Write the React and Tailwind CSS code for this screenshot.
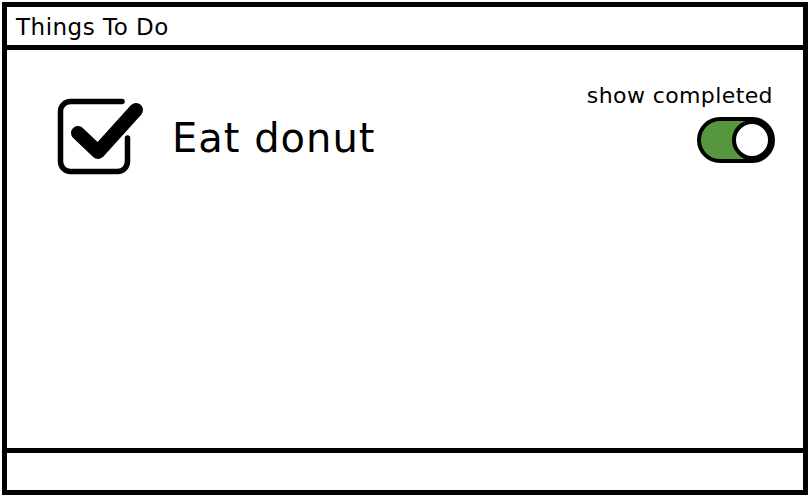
export default function App() {
  return (
    <div className="w-[812px] h-[500px] bg-white overflow-hidden" style={{ fontFamily: '"DejaVu Sans", sans-serif' }}>
      <div className="ml-[2px] mt-[2px] w-[806px] h-[493px] border-[5px] border-black flex flex-col box-border">
        <div className="h-[43px] shrink-0 border-b-[5px] border-black flex items-center pl-[9px] pt-[3px] text-[23px] text-black leading-none tracking-[0.5px]">
          Things To Do
        </div>
        <div className="flex-1 flex justify-between">
          <div className="flex items-start pl-[43px] pt-[42px]">
            <svg width="100" height="90" viewBox="0 0 100 90" fill="none">
              <path
                d="M72 9.5 H20.5 A10 10 0 0 0 10.5 19.5 V69.5 A10 10 0 0 0 20.5 79.5 H67.5 A10 10 0 0 0 77.5 69.5 V46"
                stroke="black"
                strokeWidth="5.5"
                strokeLinecap="round"
                strokeLinejoin="round"
              />
              <path
                d="M28 41 L48 60 L86 18"
                stroke="black"
                strokeWidth="14"
                strokeLinecap="round"
                strokeLinejoin="round"
              />
            </svg>
            <div className="ml-[22px] mt-[22px] text-[40px] leading-[48px] text-black tracking-[1px]">Eat donut</div>
          </div>
          <div className="flex flex-col items-end pt-[33px] pr-[28px]">
            <div className="text-[22px] leading-[26px] text-black mr-[2px] tracking-[0.4px]">show completed</div>
            <div className="mt-[8px] w-[78px] h-[46px] rounded-full border-4 border-black bg-[#56963c] flex items-center justify-end box-border">
              <div className="w-[40px] h-[40px] rounded-full bg-white border-4 border-black box-border -mr-[1px]"></div>
            </div>
          </div>
        </div>
        <div className="h-[42px] shrink-0 border-t-[5px] border-black"></div>
      </div>
    </div>
  );
}
